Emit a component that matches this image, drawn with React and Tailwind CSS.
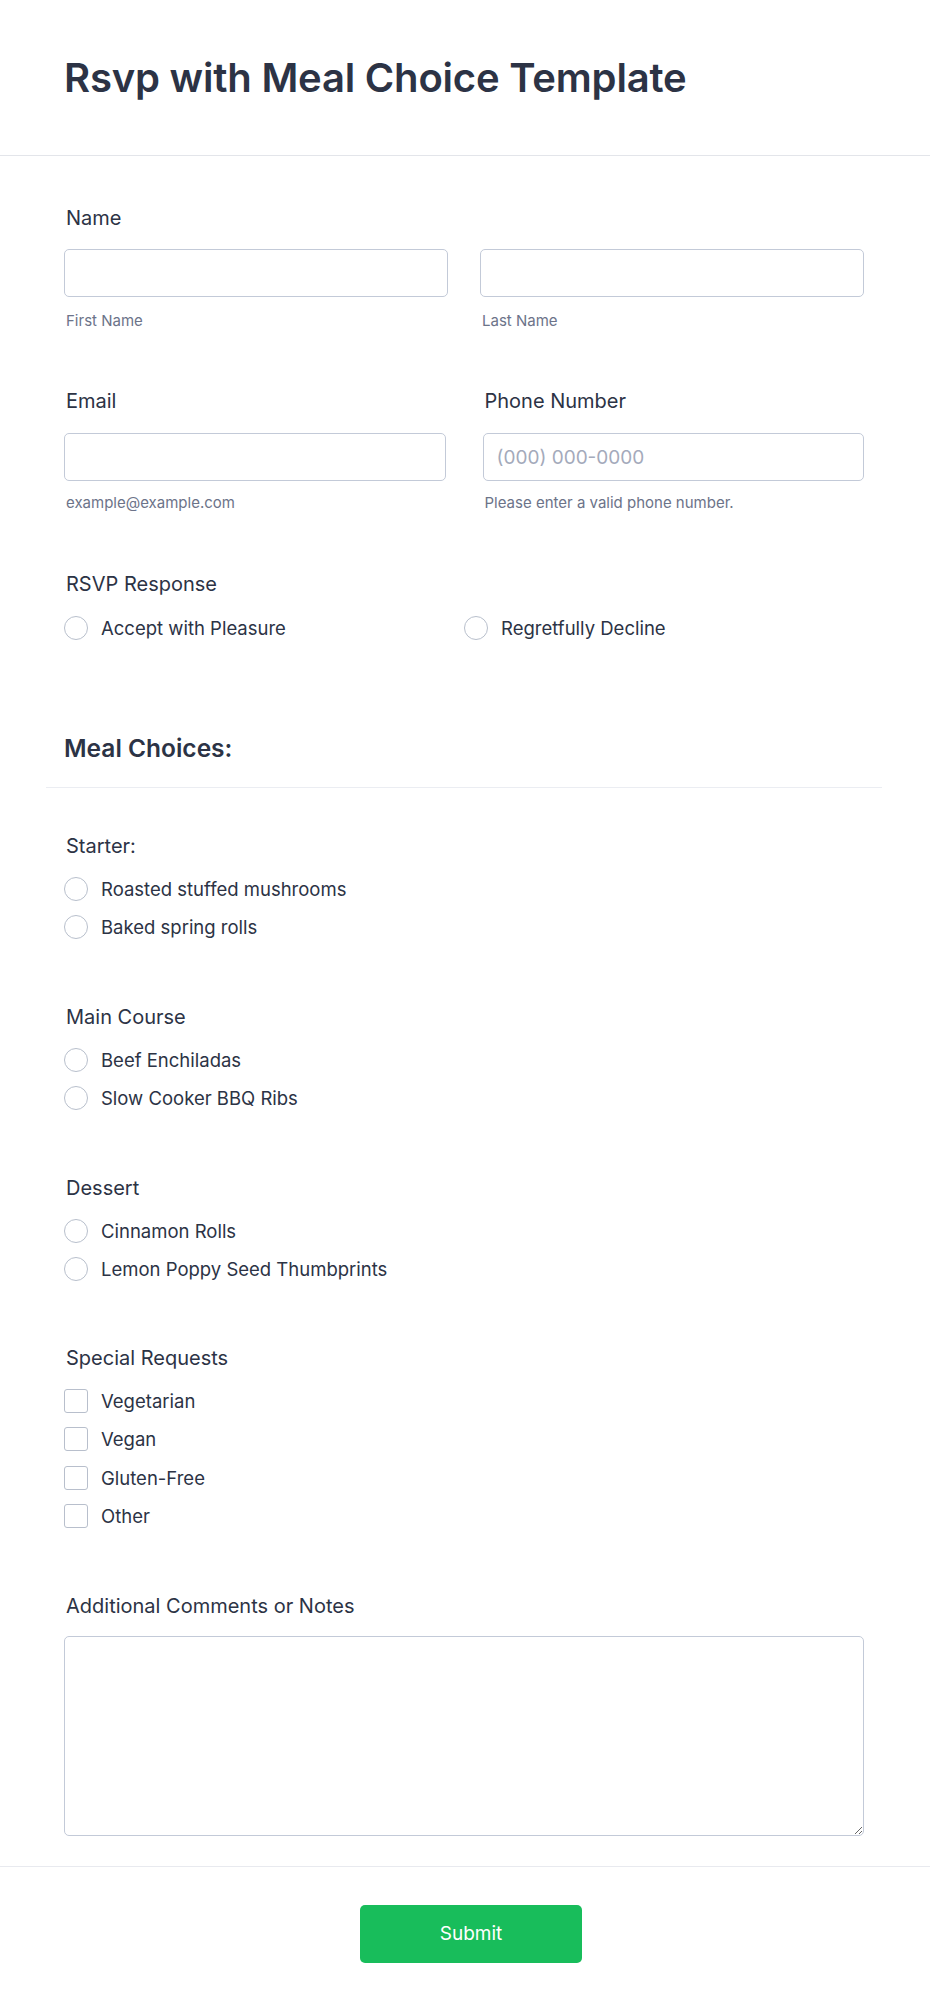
import React, { useState } from 'react'

function FieldLabel({ children }) {
  return (
    <label className="block pl-[2px] text-[20px] leading-[24px] text-[#2c3345]">
      {children}
    </label>
  )
}

function TextInput({ placeholder }) {
  return (
    <input
      type="text"
      placeholder={placeholder}
      className="w-full h-[48px] px-[13px] rounded-[5px] border border-[#c3cad8] bg-white text-[19px] text-[#2c3345] placeholder:text-[#a4aabb] outline-none focus:border-[#4c9aff]"
    />
  )
}

function SubLabel({ children }) {
  return (
    <span className="block pl-[2px] text-[15px] leading-[20px] text-[#6c7389]">
      {children}
    </span>
  )
}

function RadioOption({ name, value, checked, onChange }) {
  return (
    <label className="flex items-center gap-[13px] h-[24px] cursor-pointer">
      <span
        className={`w-[24px] h-[24px] rounded-full border bg-white flex items-center justify-center shrink-0 ${
          checked ? 'border-[#18bd5b]' : 'border-[#b8bfcc]'
        }`}
      >
        {checked && <span className="w-[12px] h-[12px] rounded-full bg-[#18bd5b]" />}
      </span>
      <input type="radio" name={name} className="hidden" checked={checked} onChange={() => onChange(value)} />
      <span className="text-[18.5px] leading-[24px] text-[#2c3345]">{value}</span>
    </label>
  )
}

function RadioGroup({ label, name, options }) {
  const [selected, setSelected] = useState(null)
  return (
    <div>
      <FieldLabel>{label}</FieldLabel>
      <div className="mt-[19px] flex flex-col gap-[14px]">
        {options.map((opt) => (
          <RadioOption key={opt} name={name} value={opt} checked={selected === opt} onChange={setSelected} />
        ))}
      </div>
    </div>
  )
}

function CheckOption({ value, checked, onToggle }) {
  return (
    <label className="flex items-center gap-[13px] h-[24px] cursor-pointer">
      <span
        className={`w-[24px] h-[24px] rounded-[3px] border flex items-center justify-center shrink-0 ${
          checked ? 'border-[#18bd5b] bg-[#18bd5b]' : 'border-[#b8bfcc] bg-white'
        }`}
      >
        {checked && (
          <svg className="w-[16px] h-[16px] text-white" viewBox="0 0 24 24" fill="none" stroke="currentColor" strokeWidth={3}>
            <path strokeLinecap="round" strokeLinejoin="round" d="M5 13l4 4L19 7" />
          </svg>
        )}
      </span>
      <input type="checkbox" className="hidden" checked={checked} onChange={onToggle} />
      <span className="text-[18.5px] leading-[24px] text-[#2c3345]">{value}</span>
    </label>
  )
}

export default function App() {
  const [rsvp, setRsvp] = useState(null)
  const [requests, setRequests] = useState([])

  const toggleRequest = (item) => {
    setRequests((prev) => (prev.includes(item) ? prev.filter((r) => r !== item) : [...prev, item]))
  }

  return (
    <div className="min-h-screen bg-white font-['Inter',sans-serif] text-[#2c3345]">
      {/* Header */}
      <header className="h-[156px] flex items-center px-[64px] border-b border-[#e3e5ea]">
        <h1 className="text-[40px] leading-[48px] font-semibold tracking-[-0.2px]">
          Rsvp with Meal Choice Template
        </h1>
      </header>

      <form onSubmit={(e) => e.preventDefault()}>
        <div className="pl-[46px] pr-[48px]">
          <div className="pt-[50px] px-[18px]">
            {/* Name */}
            <div>
              <FieldLabel>Name</FieldLabel>
              <div className="mt-[19px] grid grid-cols-2 gap-[32px]">
                <div>
                  <TextInput />
                  <div className="mt-[14px]">
                    <SubLabel>First Name</SubLabel>
                  </div>
                </div>
                <div>
                  <TextInput />
                  <div className="mt-[14px]">
                    <SubLabel>Last Name</SubLabel>
                  </div>
                </div>
              </div>
            </div>

            {/* Email + Phone */}
            <div className="mt-[58px] grid grid-cols-2 gap-[37px]">
              <div>
                <FieldLabel>Email</FieldLabel>
                <div className="mt-[20px]">
                  <TextInput />
                </div>
                <div className="mt-[12px]">
                  <SubLabel>example@example.com</SubLabel>
                </div>
              </div>
              <div>
                <FieldLabel>Phone Number</FieldLabel>
                <div className="mt-[20px]">
                  <TextInput placeholder="(000) 000-0000" />
                </div>
                <div className="mt-[12px]">
                  <SubLabel>Please enter a valid phone number.</SubLabel>
                </div>
              </div>
            </div>

            {/* RSVP */}
            <div className="mt-[59px]">
              <FieldLabel>RSVP Response</FieldLabel>
              <div className="mt-[20px] grid grid-cols-2">
                {['Accept with Pleasure', 'Regretfully Decline'].map((opt) => (
                  <RadioOption key={opt} name="rsvp" value={opt} checked={rsvp === opt} onChange={setRsvp} />
                ))}
              </div>
            </div>
          </div>

          {/* Meal choices heading */}
          <div className="mt-[92px] px-[18px] pb-[23px] border-b border-[#ebedf2]">
            <h2 className="text-[24.5px] leading-[32px] font-semibold">Meal Choices:</h2>
          </div>

          <div className="px-[18px] pt-[46px] pb-[30px]">
            <RadioGroup label="Starter:" name="starter" options={['Roasted stuffed mushrooms', 'Baked spring rolls']} />

            <div className="mt-[66px]">
              <RadioGroup label="Main Course" name="main" options={['Beef Enchiladas', 'Slow Cooker BBQ Ribs']} />
            </div>

            <div className="mt-[66px]">
              <RadioGroup label="Dessert" name="dessert" options={['Cinnamon Rolls', 'Lemon Poppy Seed Thumbprints']} />
            </div>

            {/* Special requests */}
            <div className="mt-[65px]">
              <FieldLabel>Special Requests</FieldLabel>
              <div className="mt-[19px] flex flex-col gap-[14.3px]">
                {['Vegetarian', 'Vegan', 'Gluten-Free', 'Other'].map((item) => (
                  <CheckOption
                    key={item}
                    value={item}
                    checked={requests.includes(item)}
                    onToggle={() => toggleRequest(item)}
                  />
                ))}
              </div>
            </div>

            {/* Comments */}
            <div className="mt-[66px]">
              <FieldLabel>Additional Comments or Notes</FieldLabel>
              <textarea className="mt-[18px] block w-full h-[200px] rounded-[5px] border border-[#c3cad8] bg-white p-[13px] text-[19px] outline-none focus:border-[#4c9aff]" />
            </div>
          </div>
        </div>

        {/* Submit */}
        <div className="border-t border-[#e8eaef] pt-[38px] pb-[50px] pl-[12px] flex justify-center">
          <button
            type="submit"
            className="w-[222px] h-[58px] rounded-[5px] bg-[#18bd5b] text-white text-[19px] font-normal hover:bg-[#16a94f] transition-colors"
          >
            Submit
          </button>
        </div>
      </form>
    </div>
  )
}
